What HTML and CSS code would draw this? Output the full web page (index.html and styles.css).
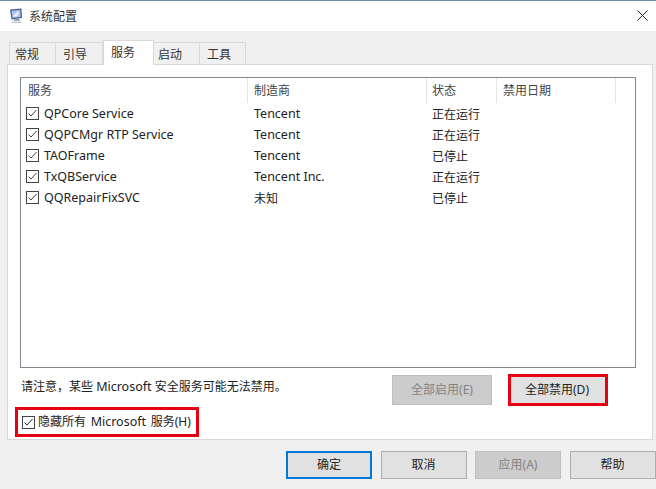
FILE: index.html
```html
<!DOCTYPE html>
<html lang="zh-CN">
<head>
<meta charset="utf-8">
<title>系统配置</title>
<link rel="stylesheet" href="styles.css">
</head>
<body>
<div class="window">
  <header class="titlebar">
    <svg class="app-icon" width="15" height="16" viewBox="0 0 15 16">
      <path d="M1 1.500L12.500.5 13 10 2.500 11.500z" fill="#4d5f8f"/>
      <path d="M2.500 2.800L11.300 2 11.700 9 3.500 10z" fill="#a9c4ee"/>
      <path d="M4.500 8.500L9.500 3.500M6.500 8.500l3-3" stroke="#f2f7ff" stroke-width="1.200"/>
      <path d="M5 11.500l5-.7 1 2H5z" fill="#8c94a8"/>
      <path d="M3 13.500h9.500V15H3z" fill="#c3c7d2"/>
    </svg>
    <span class="title">系统配置</span>
    <svg class="close" width="11" height="11" viewBox="0 0 11 11"><path d="M.5.5l10 10M10.500.5l-10 10" stroke="#222" stroke-width="1" fill="none"/></svg>
  </header>
  <div class="body">
    <nav class="tabs">
      <span class="tab">常规</span>
      <span class="tab">引导</span>
      <span class="tab active">服务</span>
      <span class="tab tight">启动</span>
      <span class="tab">工具</span>
    </nav>
    <section class="panel">
      <div class="list">
        <div class="row head">
          <span class="cell">服务</span>
          <span class="cell">制造商</span>
          <span class="cell">状态</span>
          <span class="cell">禁用日期</span>
          <span class="cell"></span>
        </div>
        <div class="row">
          <span class="cell name lat"><span class="check"><svg width="13" height="13" viewBox="0 0 13 13"><path d="M2.500 6.500l2.500 2.500L10.500 3" stroke="#444" fill="none"/></svg></span>QPCore Service</span>
          <span class="cell lat">Tencent</span><span class="cell">正在运行</span><span class="cell"></span><span class="cell"></span>
        </div>
        <div class="row">
          <span class="cell name lat"><span class="check"><svg width="13" height="13" viewBox="0 0 13 13"><path d="M2.500 6.500l2.500 2.500L10.500 3" stroke="#444" fill="none"/></svg></span>QQPCMgr RTP Service</span>
          <span class="cell lat">Tencent</span><span class="cell">正在运行</span><span class="cell"></span><span class="cell"></span>
        </div>
        <div class="row">
          <span class="cell name lat"><span class="check"><svg width="13" height="13" viewBox="0 0 13 13"><path d="M2.500 6.500l2.500 2.500L10.500 3" stroke="#444" fill="none"/></svg></span>TAOFrame</span>
          <span class="cell lat">Tencent</span><span class="cell">已停止</span><span class="cell"></span><span class="cell"></span>
        </div>
        <div class="row">
          <span class="cell name lat"><span class="check"><svg width="13" height="13" viewBox="0 0 13 13"><path d="M2.500 6.500l2.500 2.500L10.500 3" stroke="#444" fill="none"/></svg></span>TxQBService</span>
          <span class="cell lat">Tencent Inc.</span><span class="cell">正在运行</span><span class="cell"></span><span class="cell"></span>
        </div>
        <div class="row">
          <span class="cell name lat"><span class="check"><svg width="13" height="13" viewBox="0 0 13 13"><path d="M2.500 6.500l2.500 2.500L10.500 3" stroke="#444" fill="none"/></svg></span>QQRepairFixSVC</span>
          <span class="cell">未知</span><span class="cell">已停止</span><span class="cell"></span><span class="cell"></span>
        </div>
      </div>
      <div class="notice-row">
        <p class="notice">请注意，某些 <span class="lat">Microsoft</span> 安全服务可能无法禁用。</p>
        <div class="notice-actions">
          <button class="btn disabled wide">全部启用(E)</button>
          <button class="btn wide marked">全部禁用(D)</button>
        </div>
      </div>
      <label class="hide-ms">
        <span class="check dark"><svg width="13" height="13" viewBox="0 0 13 13"><path d="M2.500 6.500l2.500 2.500L10.500 3" stroke="#222" fill="none"/></svg></span><span class="hide-text">隐藏所有 <span class="lat">Microsoft</span> 服务(H)</span>
      </label>
    </section>
    <footer class="footer">
      <button class="btn foot primary">确定</button>
      <button class="btn foot">取消</button>
      <button class="btn foot disabled">应用(A)</button>
      <button class="btn foot">帮助</button>
    </footer>
  </div>
</div>
</body>
</html>
```
FILE: styles.css
```css
* { box-sizing: border-box; }
html, body { margin: 0; padding: 0; }
body {
  width: 656px;
  height: 489px;
  overflow: hidden;
  font-family: "Noto Sans", "Noto Sans CJK SC", sans-serif;
  font-size: 12px;
  color: #222;
  background: #f0f0f0;
}
.lat { font-size: 12.500px; }
.window { display: flex; flex-direction: column; height: 489px; }
.titlebar {
  height: 31px;
  flex: none;
  background: #fff;
  border-top: 1px solid #6d8ea8;
  display: flex;
  align-items: center;
  padding: 0 7px 1px 9px;
}
.app-icon { flex: none; margin-right: 5px; }
.title { color: #333; }
.close { margin-left: auto; margin-right: 1px; }
.body { flex: 1; display: flex; flex-direction: column; padding: 11px 3px 0 7px; }
.tabs { display: flex; height: 22px; flex: none; padding-left: 2px; position: relative; z-index: 1; }
.tab {
  height: 23px;
  width: 47px;
  display: flex;
  align-items: center;
  padding-left: 7px;
  background: #f0f0f0;
  border: 1px solid #d9d9d9;
  border-left: 0;
  color: #333;
}
.tab:first-child { border-left: 1px solid #d9d9d9; padding-left: 5px; }
.tab:nth-child(4), .tab:nth-child(5) { width: 46px; }
.tab.tight { padding-left: 4px; }
.tab.active {
  background: #fff;
  height: 25px;
  margin-top: -2px;
  border-bottom: 0;
  width: 51px;
  border-left: 1px solid #d9d9d9;
  padding-left: 7px;
  padding-bottom: 3px;
}
.panel {
  height: 376px;
  flex: none;
  background: #fff;
  border: 1px solid #d9d9d9;
  padding: 12px 16px 0 12px;
  display: flex;
  flex-direction: column;
}
.list {
  height: 291px;
  flex: none;
  border: 1px solid #828790;
  background: #fff;
}
.row {
  display: grid;
  grid-template-columns: 227px 179px 70px 119px 20px;
  height: 21px;
  align-items: center;
}
.row .cell { padding-left: 6px; white-space: nowrap; display: flex; align-items: center; height: 21px; }
.row .cell:nth-child(3) { padding-left: 5px; }
.row.head { height: 25px; color: #444; }
.row.head .cell { height: 25px; padding-bottom: 2px; border-right: 1px solid #e5e5e5; }
.row.head .cell:first-child { padding-left: 7px; }
.row.head .cell:last-child { border-right: 0; }
.row .name { padding-left: 5px; }
.check {
  width: 13px;
  height: 13px;
  border: 1px solid #444;
  background: #fff;
  display: inline-flex;
  align-items: center;
  justify-content: center;
  margin-right: 5px;
  flex: none;
}
.check svg { flex: none; margin: -1px; }
.notice-row { display: flex; align-items: center; justify-content: space-between; height: 32px; margin-top: 6px; }
.notice { margin: 0 0 8px 1px; color: #222; }
.notice-actions { display: flex; align-items: center; gap: 16px; padding-right: 28px; }
.btn {
  font: inherit;
  color: #222;
  background: #e1e1e1;
  border: 1px solid #adadad;
  padding: 0 0 2px;
}
.btn.wide { width: 100px; height: 30px; }
.btn.disabled { background: #ccc; border-color: #bfbfbf; color: #838383; }
.btn.wide.marked { height: 32px; border: 3px solid #e60012; padding-right: 2px; }
.hide-ms {
  display: flex;
  align-items: center;
  align-self: flex-start;
  width: 184px;
  height: 30px;
  margin: 1px 0 0 -5px;
  border: 3px solid #e60012;
  padding-left: 4px;
  white-space: nowrap;
  color: #222;
}
.hide-ms .check { margin-right: 3px; }
.hide-text { padding-bottom: 2px; word-spacing: 1.500px; }
.footer { display: flex; justify-content: flex-end; gap: 8.500px; margin-top: 11px; margin-right: -2.500px; }
.btn.foot { width: 86px; height: 28px; }
.btn.primary { border: 2px solid #0078d7; }
```
